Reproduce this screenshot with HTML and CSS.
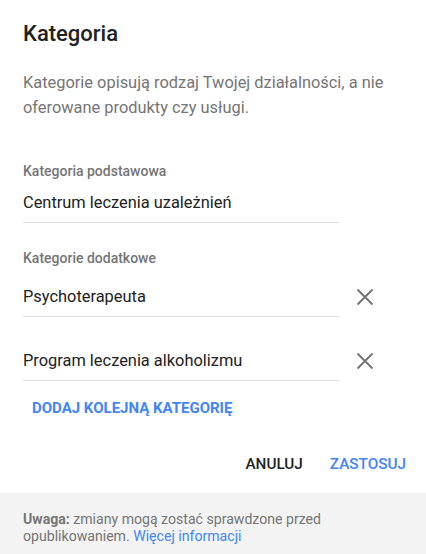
FILE: index.html
```html
<!DOCTYPE html>
<html lang="pl">
<head>
    <meta charset="utf-8">
    <title>Kategoria</title>
    <link rel="stylesheet" href="styles.css">
</head>
<body>
    <div class="dialog">
        <div class="content">
            <h1>Kategoria</h1>
            <p class="desc">Kategorie opisują rodzaj Twojej działalności, a nie oferowane produkty czy usługi.</p>

            <div class="label">Kategoria podstawowa</div>
            <div class="row">
                <div class="field">Centrum leczenia uzależnień</div>
            </div>

            <div class="label extra">Kategorie dodatkowe</div>
            <div class="row first">
                <div class="field">Psychoterapeuta</div>
                <button class="remove" title="Usuń">
                    <svg width="24" height="24" viewBox="0 0 24 24"><path d="M4.5 4.5L19.5 19.5M19.5 4.5L4.5 19.5" stroke="#757575" stroke-width="2" fill="none"/></svg>
                </button>
            </div>
            <div class="row second">
                <div class="field">Program leczenia alkoholizmu</div>
                <button class="remove" title="Usuń">
                    <svg width="24" height="24" viewBox="0 0 24 24"><path d="M4.5 4.5L19.5 19.5M19.5 4.5L4.5 19.5" stroke="#757575" stroke-width="2" fill="none"/></svg>
                </button>
            </div>

            <a class="add" href="#">DODAJ KOLEJNĄ KATEGORIĘ</a>

            <div class="actions">
                <button class="btn cancel">ANULUJ</button>
                <button class="btn apply">ZASTOSUJ</button>
            </div>
        </div>
        <div class="note">
            <p><b>Uwaga:</b> zmiany mogą zostać sprawdzone przed</p>
            <p>opublikowaniem. <a href="#">Więcej informacji</a></p>
        </div>
    </div>
</body>
</html>
```

FILE: styles.css
```css
body {
    margin: 0;
    font-family: Roboto, Arial, sans-serif;
    background: #fff;
}

.dialog {
    width: 426px;
    height: 554px;
    display: flex;
    flex-direction: column;
}

.content {
    flex: 1;
    padding: 20px 20px 0 23px;
}

h1 {
    margin: 0;
    font-size: 22px;
    font-weight: 500;
    line-height: 28px;
    color: #212121;
}

.desc {
    margin: 22px 0 0;
    font-size: 16.4px;
    line-height: 25px;
    color: #757575;
    width: 380px;
}

.label {
    margin-top: 41px;
    font-size: 14px;
    font-weight: 500;
    line-height: 20px;
    color: #757575;
}

.label.extra {
    margin-top: 25px;
}

.row {
    display: flex;
    align-items: flex-start;
    margin-top: 11px;
}

.row.first {
    margin-top: 18px;
}

.row.second {
    margin-top: 33px;
}

.field {
    width: 316px;
    font-size: 16.4px;
    line-height: 22px;
    color: #212121;
    padding-bottom: 8px;
    border-bottom: 1px solid #e0e0e0;
}

.remove {
    border: none;
    background: none;
    padding: 0;
    margin: -1px 0 0 14px;
    width: 24px;
    height: 24px;
    cursor: pointer;
}

.remove svg {
    display: block;
}

.add {
    display: inline-block;
    margin: 17px 0 0 9px;
    font-size: 15px;
    font-weight: 700;
    color: #4285f4;
    text-decoration: none;
    line-height: 20px;
}

.actions {
    display: flex;
    justify-content: flex-end;
    gap: 27px;
    margin-top: 36px;
}

.btn {
    border: none;
    background: none;
    padding: 0;
    font-family: Roboto, Arial, sans-serif;
    font-size: 15.3px;
    font-weight: 500;
    line-height: 20px;
    cursor: pointer;
}

.cancel {
    color: #212121;
}

.apply {
    color: #4285f4;
}

.note {
    background: #f3f3f3;
    height: 61px;
    box-sizing: border-box;
    padding: 19px 23px 0;
    font-size: 14.1px;
    color: #757575;
}

.note p {
    margin: 0;
    height: 17px;
    line-height: 15px;
}

.note b {
    font-weight: 700;
}

.note a {
    color: #4285f4;
    text-decoration: none;
}
```
